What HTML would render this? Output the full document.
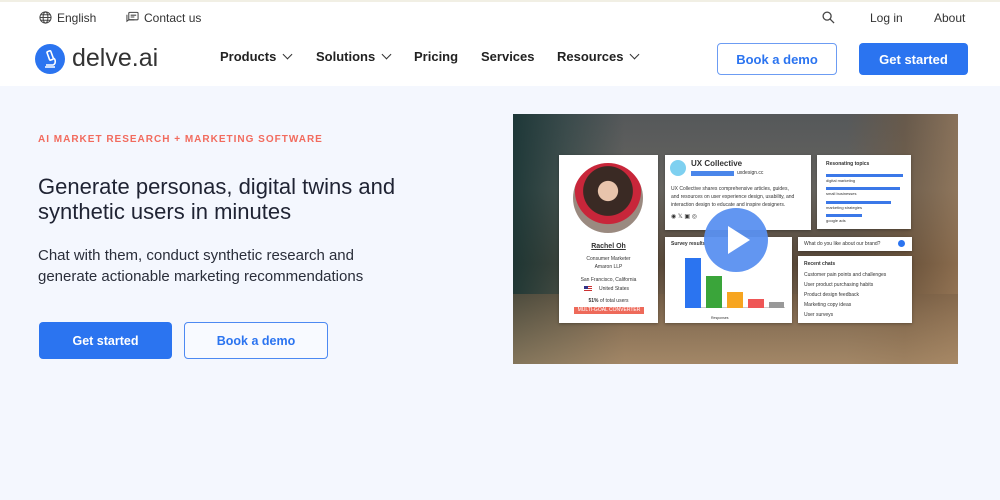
<!DOCTYPE html>
<html><head><meta charset="utf-8"><style>
*{margin:0;padding:0;box-sizing:border-box}
body{width:1000px;height:500px;overflow:hidden;background:#f4f7fe;font-family:"Liberation Sans",sans-serif;position:relative;color:#222}
.abs{position:absolute}
#hdr{position:absolute;left:0;top:0;width:1000px;height:86px;background:#fff;border-top:2px solid #f1efe4}
.top{font-size:12px;color:#333}
.nav{font-size:13px;font-weight:bold;color:#222;top:47px}
.chev{display:inline-block;width:7px;height:7px;border-right:1.3px solid #333;border-bottom:1.3px solid #333;transform:rotate(45deg);margin-left:8px;position:relative;top:-3px}
.btn{position:absolute;border-radius:4px;font-weight:bold;display:flex;align-items:center;justify-content:center}
.card{position:absolute;background:#fff;box-shadow:0 1px 3px rgba(0,0,0,.3)}
.t{position:absolute;font-size:5px;color:#333;white-space:nowrap}
</style></head><body>
<div id="hdr">
 <svg class="abs" style="left:39px;top:9px" width="13" height="13" viewBox="0 0 14 14" fill="none" stroke="#444" stroke-width="1.1"><circle cx="7" cy="7" r="6"/><ellipse cx="7" cy="7" rx="2.6" ry="6"/><path d="M1 7h12M2 4h10M2 10h10"/></svg>
 <div class="abs top" style="left:57px;top:9px">English</div>
 <svg class="abs" style="left:126px;top:9px" width="13" height="13" viewBox="0 0 14 14" fill="none" stroke="#444" stroke-width="1.1"><rect x="3" y="1.5" width="10" height="8" rx="1"/><path d="M1 4v7l2-1.5h6"/><path d="M5 4.5h6M5 6.5h4"/></svg>
 <div class="abs top" style="left:144px;top:9px">Contact us</div>
 <svg class="abs" style="left:822px;top:9px" width="13" height="13" viewBox="0 0 14 14" fill="none" stroke="#444" stroke-width="1.4"><circle cx="5.5" cy="5.5" r="4.3"/><path d="M8.7 8.7L13 13"/></svg>
 <div class="abs top" style="left:870px;top:9px">Log in</div>
 <div class="abs top" style="left:934px;top:9px">About</div>
 <div class="abs" style="left:35px;top:42px;width:30px;height:30px;border-radius:50%;background:#2b74f0"></div>
 <svg class="abs" style="left:35px;top:42px" width="30" height="30" viewBox="0 0 30 30" fill="none" stroke="#fff" stroke-width="1.6"><rect x="13" y="7" width="4" height="9" rx="1" transform="rotate(-20 15 11)"/><path d="M18 14c3 1 3 6 0 7h-7M10 23h10"/></svg>
 <div class="abs" style="left:72px;top:42px;font-size:25px;color:#333">delve.ai</div>
 <div class="abs nav" style="left:220px">Products<span class="chev"></span></div>
 <div class="abs nav" style="left:316px">Solutions<span class="chev"></span></div>
 <div class="abs nav" style="left:414px">Pricing</div>
 <div class="abs nav" style="left:481px">Services</div>
 <div class="abs nav" style="left:557px">Resources<span class="chev"></span></div>
 <div class="btn" style="left:717px;top:41px;width:120px;height:32px;border:1.5px solid #6c9cf3;color:#2b74f0;font-size:13px">Book a demo</div>
 <div class="btn" style="left:859px;top:41px;width:109px;height:32px;background:#2b74f0;color:#fff;font-size:13px">Get started</div>
</div>
<div class="abs" style="left:38px;top:134px;font-size:10px;font-weight:bold;color:#f26b5e;letter-spacing:1px">AI MARKET RESEARCH + MARKETING SOFTWARE</div>
<div class="abs" style="left:38px;top:174px;font-size:22px;line-height:25px;color:#1f2333">Generate personas, digital twins and<br>synthetic users in minutes</div>
<div class="abs" style="left:38px;top:245px;font-size:15px;line-height:21px;color:#2a2e3a">Chat with them, conduct synthetic research and<br>generate actionable marketing recommendations</div>
<div class="btn" style="left:39px;top:322px;width:133px;height:37px;background:#2b74f0;color:#fff;font-size:12.5px">Get started</div>
<div class="btn" style="left:184px;top:322px;width:144px;height:37px;border:1.5px solid #4d89f2;color:#2b74f0;font-size:12.5px;background:#f8faff">Book a demo</div>

<div class="abs" style="left:513px;top:114px;width:445px;height:250px;overflow:hidden;background:linear-gradient(180deg,#55585a 0%,#66645f 30%,#5a4a3a 60%,#7a6650 80%,#907a60 100%)">
 <div class="abs" style="left:0;top:0;width:445px;height:250px;background:linear-gradient(90deg,rgba(20,50,50,.85) 0%,rgba(30,60,60,.5) 12%,rgba(0,0,0,0) 25%,rgba(0,0,0,0) 75%,rgba(120,90,60,.5) 88%,rgba(170,130,90,.6) 100%)"></div>
 <div class="abs" style="left:0;top:180px;width:445px;height:70px;background:linear-gradient(180deg,rgba(120,95,70,.5),rgba(170,140,105,.7))"></div>
</div>
<div class="card" style="left:559px;top:155px;width:99px;height:168px">
 <div class="abs" style="left:14px;top:8px;width:70px;height:70px;border-radius:50%;background:radial-gradient(circle at 50% 40%,#e8c4ac 0 18%,#3a2a24 19% 45%,#c8263a 46% 60%,#9a8a80 61%)"></div>
 <div class="t" style="left:0;width:99px;text-align:center;top:88px;font-size:7px;font-weight:bold;text-decoration:underline">Rachel Oh</div>
 <div class="t" style="left:0;width:99px;text-align:center;top:101px">Consumer Marketer</div>
 <div class="t" style="left:0;width:99px;text-align:center;top:109px">Amaron LLP</div>
 <div class="t" style="left:0;width:99px;text-align:center;top:122px">San Francisco, California</div>
 <div class="abs" style="left:25px;top:131px;width:8px;height:5px;background:repeating-linear-gradient(#c33 0 1px,#fff 1px 2px)"><div style="width:4px;height:3px;background:#338"></div></div>
 <div class="t" style="left:40px;top:131px">United States</div>
 <div class="t" style="left:0;width:99px;text-align:center;top:143px"><b>51%</b> of total users</div>
 <div class="t" style="left:15px;top:152px;width:70px;height:7px;background:#ee6a5a;color:#fff;text-align:center;font-size:5px">MULTI-GOAL CONVERTER</div>
</div>
<div class="card" style="left:665px;top:155px;width:146px;height:75px">
 <div class="abs" style="left:5px;top:5px;width:16px;height:16px;border-radius:50%;background:#7ed0f0"></div>
 <div class="t" style="left:26px;top:4px;font-size:8px;font-weight:bold">UX Collective</div>
 <div class="t" style="left:26px;top:16px;width:43px;height:5px;background:#4a86ea"></div>
 <div class="t" style="left:72px;top:15px">uxdesign.cc</div>
 <div class="t" style="left:6px;top:30px;line-height:8px">UX Collective shares comprehensive articles, guides,<br>and resources on user experience design, usability, and<br>interaction design to educate and inspire designers.</div>
 <div class="t" style="left:6px;top:58px;font-size:6px">◉ 𝕏 ▣ ◎</div>
</div>
<div class="card" style="left:817px;top:155px;width:94px;height:74px">
 <div class="t" style="left:9px;top:6px;font-weight:bold">Resonating topics</div>
 <div class="abs" style="left:9px;top:19px;width:77px;height:3px;background:#3b78e8"></div><div class="t" style="left:9px;top:23px;font-size:4px">digital marketing</div>
 <div class="abs" style="left:9px;top:32px;width:74px;height:3px;background:#3b78e8"></div><div class="t" style="left:9px;top:36px;font-size:4px">small businesses</div>
 <div class="abs" style="left:9px;top:46px;width:65px;height:3px;background:#3b78e8"></div><div class="t" style="left:9px;top:50px;font-size:4px">marketing strategies</div>
 <div class="abs" style="left:9px;top:59px;width:36px;height:3px;background:#3b78e8"></div><div class="t" style="left:9px;top:63px;font-size:4px">google ads</div>
</div>
<div class="card" style="left:665px;top:237px;width:127px;height:86px">
 <div class="t" style="left:6px;top:4px;font-weight:bold">Survey results</div>
 <div class="abs" style="left:20px;top:15px;width:100px;height:56px;border-bottom:1px solid #ccc"></div>
 <div class="abs" style="left:20px;top:21px;width:16px;height:50px;background:#2b74f0"></div>
 <div class="abs" style="left:41px;top:39px;width:16px;height:32px;background:#3aa53a"></div>
 <div class="abs" style="left:62px;top:55px;width:16px;height:16px;background:#f7a520"></div>
 <div class="abs" style="left:83px;top:62px;width:16px;height:9px;background:#ef5656"></div>
 <div class="abs" style="left:104px;top:65px;width:15px;height:6px;background:#999"></div>
 <div class="t" style="left:46px;top:79px;font-size:3.5px">Responses</div>
</div>
<div class="card" style="left:798px;top:237px;width:114px;height:14px">
 <div class="t" style="left:6px;top:4px">What do you like about our brand?</div>
 <div class="abs" style="left:100px;top:3px;width:7px;height:7px;border-radius:50%;background:#2b74f0"></div>
</div>
<div class="card" style="left:798px;top:256px;width:114px;height:67px">
 <div class="t" style="left:6px;top:5px;font-weight:bold">Recent chats</div>
 <div class="t" style="left:6px;top:16px">Customer pain points and challenges</div>
 <div class="t" style="left:6px;top:26px">User product purchasing habits</div>
 <div class="t" style="left:6px;top:36px">Product design feedback</div>
 <div class="t" style="left:6px;top:46px">Marketing copy ideas</div>
 <div class="t" style="left:6px;top:56px">User surveys</div>
</div>
<div class="abs" style="left:704px;top:208px;width:64px;height:64px;border-radius:50%;background:#5a90f0;opacity:.95"></div>
<svg class="abs" style="left:704px;top:208px" width="64" height="64" viewBox="0 0 64 64"><path d="M24 18L46 32L24 46Z" fill="#fff"/></svg>
</body></html>
